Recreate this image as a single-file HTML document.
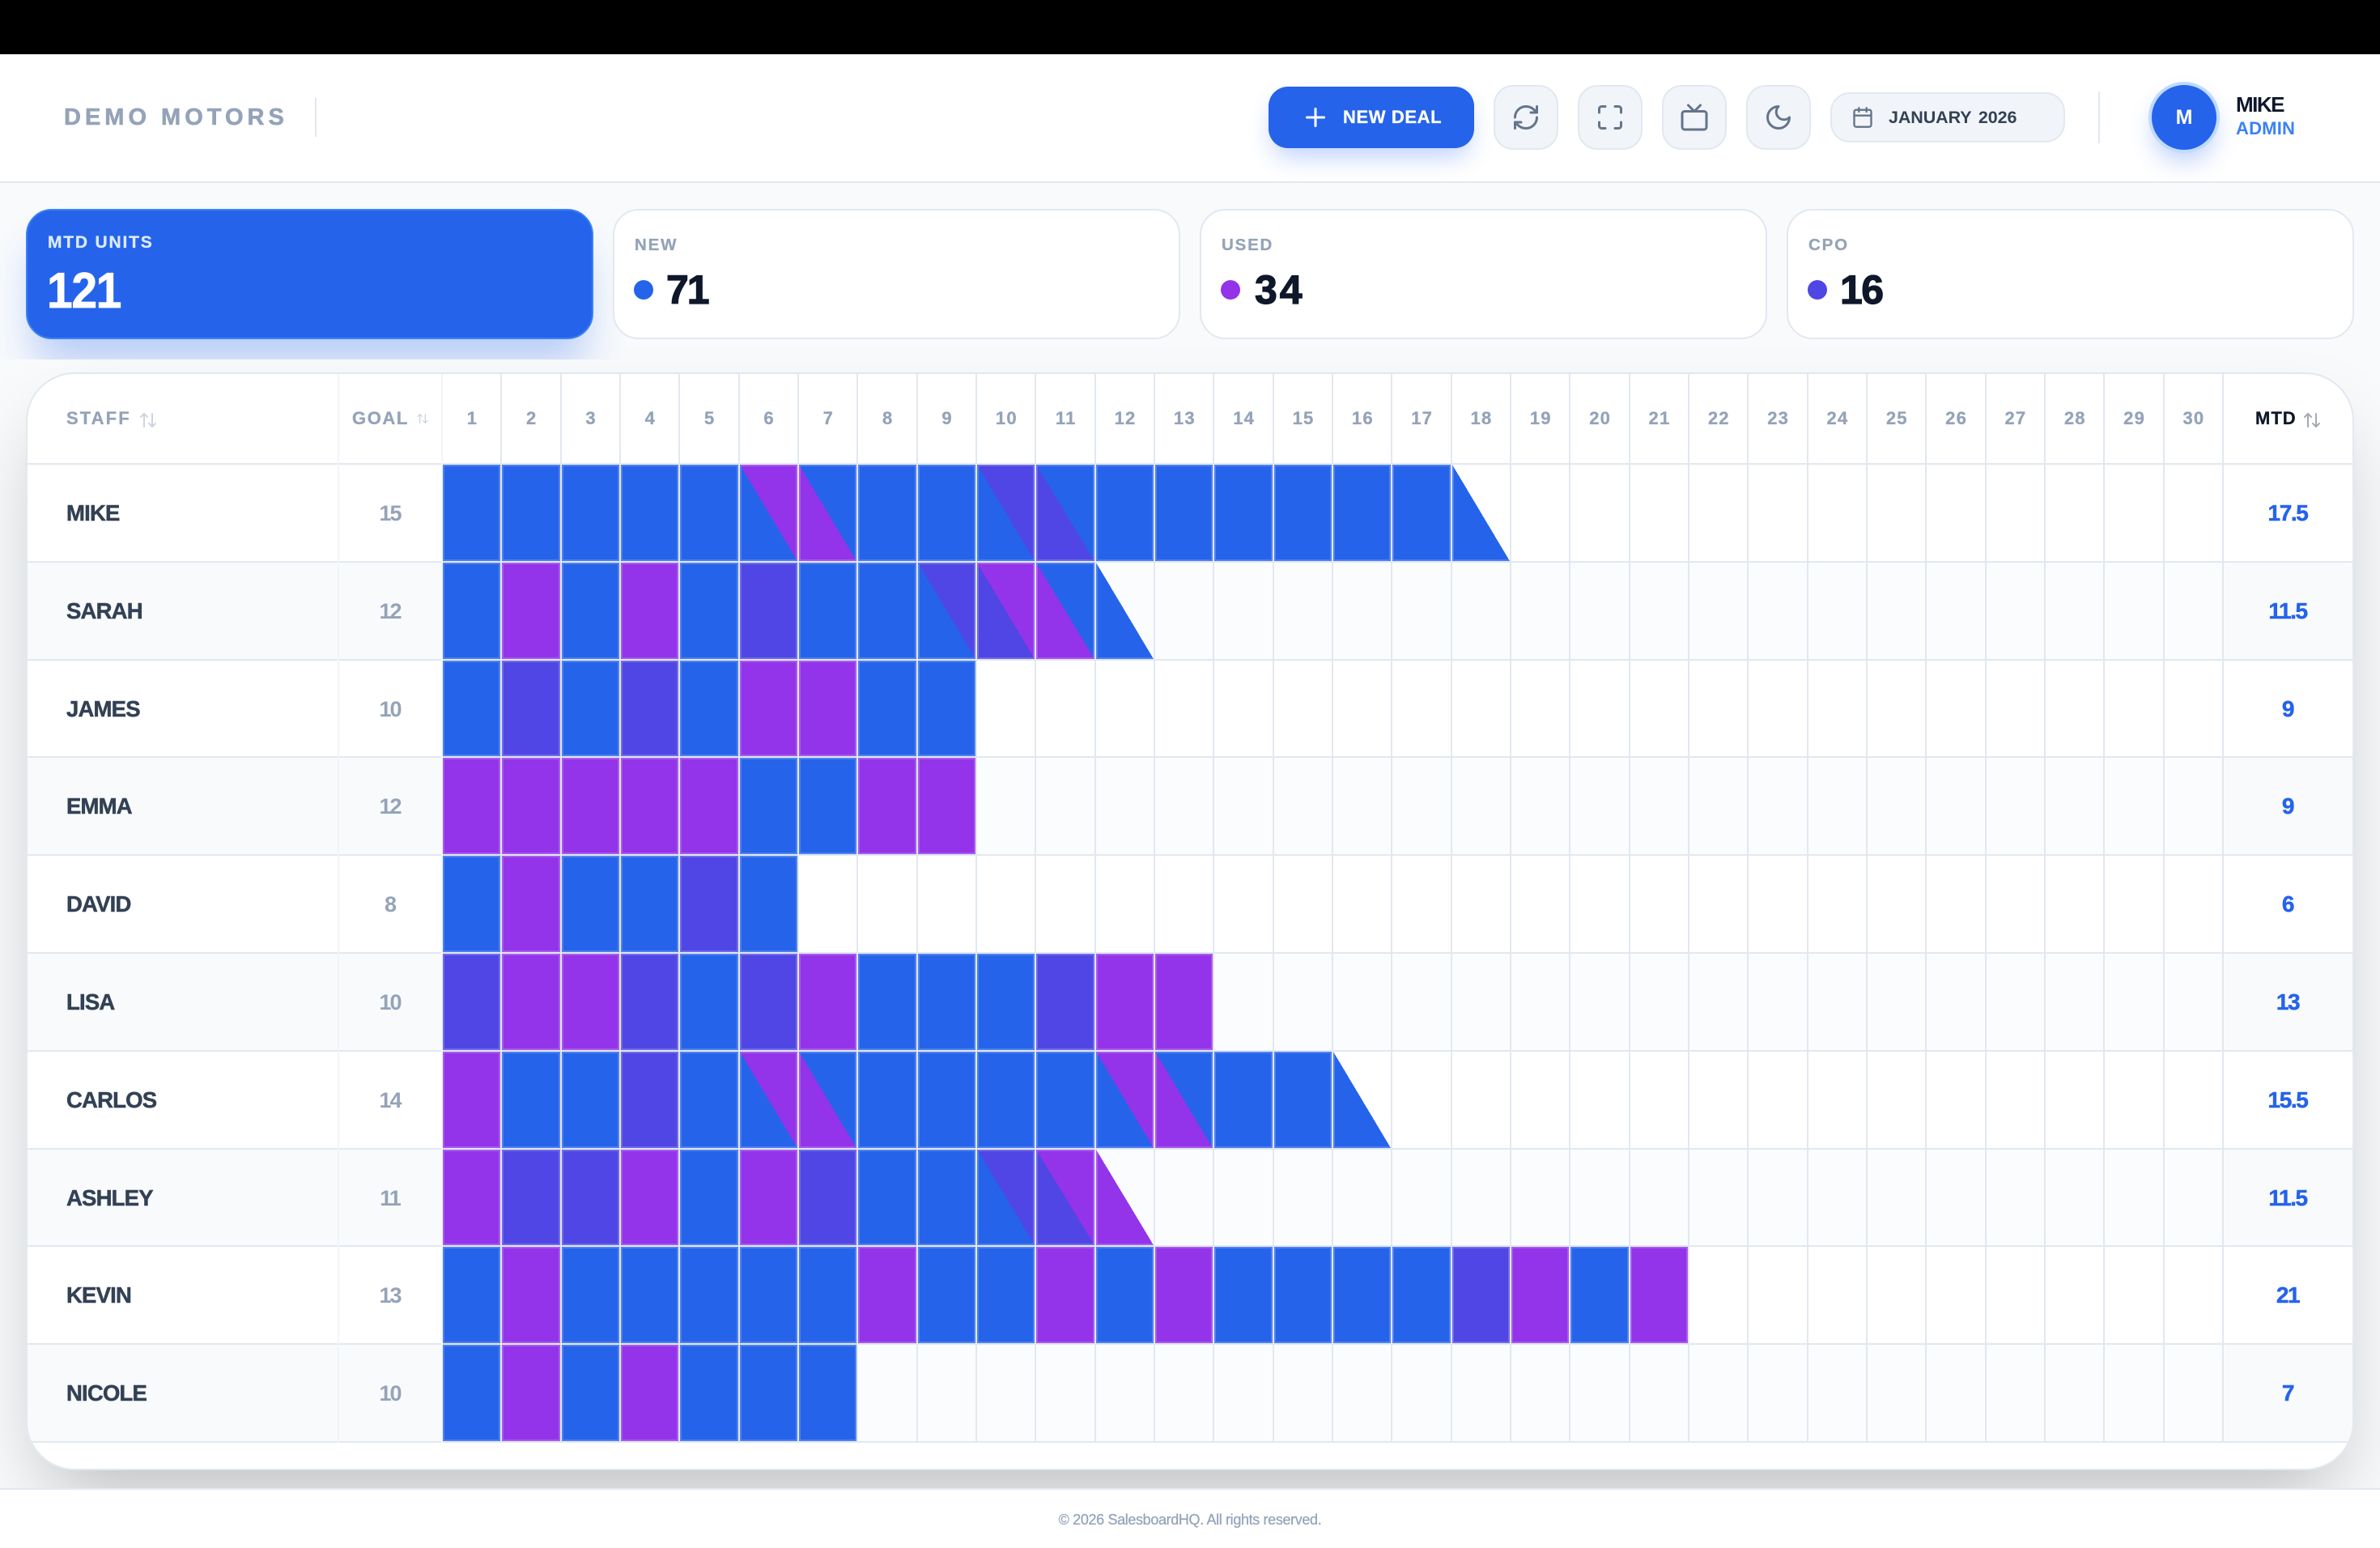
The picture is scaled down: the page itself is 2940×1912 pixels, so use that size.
<!DOCTYPE html>
<html lang="en">
<head>
<meta charset="utf-8">
<title>Demo Motors</title>
<style>
*{box-sizing:border-box}
html,body{margin:0;padding:0;width:2940px;height:1912px;overflow:hidden;background:#fff;font-family:"Liberation Sans",Arial,sans-serif;font-weight:700}
.abs,.t{position:absolute}
.t{white-space:nowrap;line-height:40px}
#top{position:absolute;left:0;top:0;width:2940px;height:67px;background:#000}
#head{position:absolute;left:0;top:67px;width:2940px;height:159px;background:#fff;border-bottom:2px solid #e2e8f0}
#main{position:absolute;left:0;top:226px;width:2940px;height:1612px;background:#f8fafc;overflow:hidden}
#foot{position:absolute;left:0;top:1838px;width:2940px;height:74px;background:#fff;border-top:2px solid #e2e8f0}
.vl{position:absolute;width:2px;background:#e2e8f0}
.ib{position:absolute;top:105px;width:80px;height:80px;border-radius:24px;background:#f1f5f9;border:2px solid #e2e8f0;display:flex;align-items:center;justify-content:center}
svg{display:block;fill:none;stroke-linecap:round;stroke-linejoin:round}
.ib svg{width:36px;height:36px;stroke:#64748b;stroke-width:2}
#deal{position:absolute;left:1567px;top:107px;width:254px;height:76px;border-radius:24px;background:#2563eb;box-shadow:0 16px 30px -6px rgba(37,99,235,.3)}
#date{position:absolute;left:2261px;top:114px;width:290px;height:62px;border-radius:24px;background:#f1f5f9;border:2px solid #e2e8f0}
#ava{position:absolute;left:2654px;top:101px;width:88px;height:88px;border-radius:50%;background:#2563eb;border:4px solid #bfdbfe;box-shadow:0 16px 30px -6px rgba(37,99,235,.3);color:#fff;font-size:25px;line-height:80px;text-align:center}
#stats{position:absolute;left:0;top:0;width:2940px;height:218px;overflow:hidden}
.s{position:absolute;top:32px;width:701px;height:161px;border-radius:32px;background:#fff;border:2px solid #e2e8f0}
.s.m{background:#2563eb;border-color:#3b82f6;box-shadow:0 40px 50px -10px rgba(37,99,235,.3)}
.lb{font-size:20.5px;letter-spacing:1.8px;color:#94a3b8;left:25px;top:23px;-webkit-text-stroke:.3px #94a3b8}
.val{font-size:50px;color:#0f172a;left:63px;top:68px;line-height:60px;-webkit-text-stroke:1.2px #0f172a}
.dot{position:absolute;left:24px;top:86px;width:24px;height:24px;border-radius:50%}
#card{position:absolute;left:32px;top:234px;width:2876px;height:1356px;background:#fff;border:2px solid #e2e8f0;border-radius:60px;overflow:hidden}
#shadow{position:absolute;left:32px;top:234px;width:2876px;height:1356px;border-radius:60px;box-shadow:0 50px 100px -24px rgba(0,0,0,.25)}
.th{position:absolute;top:0;line-height:110px;font-size:22px;color:#94a3b8;white-space:nowrap;-webkit-text-stroke:.3px #94a3b8}
#hl{position:absolute;left:0;top:110px;width:2872px;height:2px;background:#e2e8f0}
.r{position:absolute;left:0;width:2872px;height:120.8px;border-bottom:2px solid #e2e8f0}
.r.e{background:#fbfcfd}
.r.e .n,.r.e .g,.r.e .v{background:#f8fafc}
.n,.g,.v{position:absolute;top:0;height:118.8px;line-height:120px}
.n{left:0;width:383px;padding-left:48px;font-size:27.5px;letter-spacing:-.8px;color:#334155;-webkit-text-stroke:.5px #334155}
.g{left:383px;width:130px;text-align:center;font-size:27px;letter-spacing:-2px;color:#94a3b8;padding-right:1px}
.v{left:2714px;width:158px;text-align:center;font-size:28px;letter-spacing:-1.4px;color:#2563eb;-webkit-text-stroke:.5px #2563eb;padding-right:2px}
.d{position:absolute;left:513px;top:0;height:118.8px;display:flex}
.d i{flex:0 0 71.33px;margin-right:2px;height:100%;box-shadow:inset 0 0 0 2px rgba(255,255,255,.2)}
.b{background:#2563eb}.p{background:#9333ea}.x{background:#4f46e5}
.bp{background:linear-gradient(to top right,#2563eb 50%,#9333ea 50%)}
.pb{background:linear-gradient(to top right,#9333ea 50%,#2563eb 50%)}
.bx{background:linear-gradient(to top right,#2563eb 50%,#4f46e5 50%)}
.xb{background:linear-gradient(to top right,#4f46e5 50%,#2563eb 50%)}
.xp{background:linear-gradient(to top right,#4f46e5 50%,#9333ea 50%)}
.bn{background:linear-gradient(to top right,#2563eb 50%,transparent 50%)}
.pn{background:linear-gradient(to top right,#9333ea 50%,transparent 50%)}
#days{position:absolute;left:513px;top:0;height:1320px;display:flex}
#days span{flex:0 0 73.33px;height:100%;border-right:2px solid #e2e8f0;text-align:center;padding-left:1.5px;line-height:110px;font-size:22px;letter-spacing:1.2px;color:#94a3b8;-webkit-text-stroke:.3px #94a3b8}
.pl{position:absolute;top:0;width:2px;height:1320px;background:#f1f5f9}
</style>
</head>
<body>
<div id="top"></div>

<div id="head"></div>
<div class="t" style="left:79px;top:125px;font-size:29px;letter-spacing:5px;color:#94a3b8;-webkit-text-stroke:.6px #94a3b8">DEMO MOTORS</div>
<div class="vl" style="left:389px;top:121px;height:48px"></div>

<div id="deal"></div>
<svg class="abs" style="left:1607px;top:127px;width:36px;height:36px;stroke:#fff;stroke-width:2" viewBox="0 0 24 24"><path d="M5 12h14"/><path d="M12 5v14"/></svg>
<div class="t" style="left:1659px;top:125px;font-size:22px;letter-spacing:.6px;color:#fff;-webkit-text-stroke:.3px #fff">NEW DEAL</div>

<div class="ib" style="left:1845px"><svg viewBox="0 0 24 24"><path d="M3 12a9 9 0 0 1 9-9 9.75 9.75 0 0 1 6.74 2.74L21 8"/><path d="M21 3v5h-5"/><path d="M21 12a9 9 0 0 1-9 9 9.75 9.75 0 0 1-6.74-2.74L3 16"/><path d="M8 16H3v5"/></svg></div>
<div class="ib" style="left:1949px"><svg viewBox="0 0 24 24"><path d="M8 3H5a2 2 0 0 0-2 2v3"/><path d="M21 8V5a2 2 0 0 0-2-2h-3"/><path d="M3 16v3a2 2 0 0 0 2 2h3"/><path d="M16 21h3a2 2 0 0 0 2-2v-3"/></svg></div>
<div class="ib" style="left:2053px"><svg viewBox="0 0 24 24"><rect x="2" y="7" width="20" height="15" rx="2" ry="2"/><path d="M17 2l-5 5-5-5"/></svg></div>
<div class="ib" style="left:2157px"><svg viewBox="0 0 24 24"><path d="M12 3a6 6 0 0 0 9 9 9 9 0 1 1-9-9Z"/></svg></div>

<div id="date"></div>
<svg class="abs" style="left:2287px;top:131px;width:28px;height:28px;stroke:#64748b;stroke-width:2" viewBox="0 0 24 24"><path d="M8 2v4"/><path d="M16 2v4"/><rect x="3" y="4" width="18" height="18" rx="2"/><path d="M3 10h18"/></svg>
<div class="t" style="left:2333px;top:125px;font-size:21.5px;letter-spacing:-.1px;word-spacing:3px;color:#334155">JANUARY 2026</div>

<div class="vl" style="left:2592px;top:113px;height:64px"></div>
<div id="ava">M</div>
<div class="t" style="left:2762px;top:109px;font-size:26px;letter-spacing:-1.5px;color:#0f172a">MIKE</div>
<div class="t" style="left:2762px;top:139px;font-size:22px;letter-spacing:.2px;color:#3b82f6">ADMIN</div>

<div id="main">
  <div id="stats">
    <div class="s m" style="left:32px">
      <div class="t" style="left:25px;top:20px;font-size:21px;letter-spacing:1.8px;color:#dbeafe;-webkit-text-stroke:.3px #dbeafe">MTD UNITS</div>
      <div class="t" style="left:24px;top:70px;font-size:62px;letter-spacing:-1.5px;line-height:60px;color:#fff;-webkit-text-stroke:.8px #fff;transform:scaleX(.92);transform-origin:left center">121</div>
    </div>
    <div class="s" style="left:757px">
      <div class="t lb">NEW</div><div class="dot b"></div><div class="t val" style="left:64px;letter-spacing:-2px">71</div>
    </div>
    <div class="s" style="left:1482px">
      <div class="t lb">USED</div><div class="dot p"></div><div class="t val" style="left:66px;letter-spacing:3px">34</div>
    </div>
    <div class="s" style="left:2207px">
      <div class="t lb">CPO</div><div class="dot x"></div><div class="t val" style="letter-spacing:-1.5px;left:64px">16</div>
    </div>
  </div>

  <div id="shadow"></div>
  <div id="card">
    <div class="th" style="left:48px;letter-spacing:2.1px">STAFF</div>
    <svg class="abs" style="left:137px;top:45px;width:24px;height:24px;stroke:#cbd5e1;stroke-width:2" viewBox="0 0 24 24"><path d="M21 16l-4 4-4-4"/><path d="M17 20V4"/><path d="M3 8l4-4 4 4"/><path d="M7 4v16"/></svg>
    <div class="th" style="left:401px;letter-spacing:1.6px">GOAL</div>
    <svg class="abs" style="left:480px;top:47px;width:16px;height:16px;stroke:#cbd5e1;stroke-width:2" viewBox="0 0 24 24"><path d="M21 16l-4 4-4-4"/><path d="M17 20V4"/><path d="M3 8l4-4 4 4"/><path d="M7 4v16"/></svg>
    <div class="th" style="left:2752px;letter-spacing:1px;color:#0f172a;-webkit-text-stroke:.3px #0f172a">MTD</div>
    <svg class="abs" style="left:2810px;top:45px;width:24px;height:24px;stroke:#a3a9b5;stroke-width:2" viewBox="0 0 24 24"><path d="M21 16l-4 4-4-4"/><path d="M17 20V4"/><path d="M3 8l4-4 4 4"/><path d="M7 4v16"/></svg>
    <div id="hl"></div>

    <div class="r" style="top:112px"><div class="n">MIKE</div><div class="g">15</div><div class="d"><i class="b"></i><i class="b"></i><i class="b"></i><i class="b"></i><i class="b"></i><i class="bp"></i><i class="pb"></i><i class="b"></i><i class="b"></i><i class="bx"></i><i class="xb"></i><i class="b"></i><i class="b"></i><i class="b"></i><i class="b"></i><i class="b"></i><i class="b"></i><i class="bn"></i></div><div class="v">17.5</div></div>
    <div class="r e" style="top:232.8px"><div class="n">SARAH</div><div class="g">12</div><div class="d"><i class="b"></i><i class="p"></i><i class="b"></i><i class="p"></i><i class="b"></i><i class="x"></i><i class="b"></i><i class="b"></i><i class="bx"></i><i class="xp"></i><i class="pb"></i><i class="bn"></i></div><div class="v">11.5</div></div>
    <div class="r" style="top:353.6px"><div class="n">JAMES</div><div class="g">10</div><div class="d"><i class="b"></i><i class="x"></i><i class="b"></i><i class="x"></i><i class="b"></i><i class="p"></i><i class="p"></i><i class="b"></i><i class="b"></i></div><div class="v">9</div></div>
    <div class="r e" style="top:474.4px"><div class="n">EMMA</div><div class="g">12</div><div class="d"><i class="p"></i><i class="p"></i><i class="p"></i><i class="p"></i><i class="p"></i><i class="b"></i><i class="b"></i><i class="p"></i><i class="p"></i></div><div class="v">9</div></div>
    <div class="r" style="top:595.2px"><div class="n">DAVID</div><div class="g">8</div><div class="d"><i class="b"></i><i class="p"></i><i class="b"></i><i class="b"></i><i class="x"></i><i class="b"></i></div><div class="v">6</div></div>
    <div class="r e" style="top:716px"><div class="n">LISA</div><div class="g">10</div><div class="d"><i class="x"></i><i class="p"></i><i class="p"></i><i class="x"></i><i class="b"></i><i class="x"></i><i class="p"></i><i class="b"></i><i class="b"></i><i class="b"></i><i class="x"></i><i class="p"></i><i class="p"></i></div><div class="v">13</div></div>
    <div class="r" style="top:836.8px"><div class="n">CARLOS</div><div class="g">14</div><div class="d"><i class="p"></i><i class="b"></i><i class="b"></i><i class="x"></i><i class="b"></i><i class="bp"></i><i class="pb"></i><i class="b"></i><i class="b"></i><i class="b"></i><i class="b"></i><i class="bp"></i><i class="pb"></i><i class="b"></i><i class="b"></i><i class="bn"></i></div><div class="v">15.5</div></div>
    <div class="r e" style="top:957.6px"><div class="n">ASHLEY</div><div class="g">11</div><div class="d"><i class="p"></i><i class="x"></i><i class="x"></i><i class="p"></i><i class="b"></i><i class="p"></i><i class="x"></i><i class="b"></i><i class="b"></i><i class="bx"></i><i class="xp"></i><i class="pn"></i></div><div class="v">11.5</div></div>
    <div class="r" style="top:1078.4px"><div class="n">KEVIN</div><div class="g">13</div><div class="d"><i class="b"></i><i class="p"></i><i class="b"></i><i class="b"></i><i class="b"></i><i class="b"></i><i class="b"></i><i class="p"></i><i class="b"></i><i class="b"></i><i class="p"></i><i class="b"></i><i class="p"></i><i class="b"></i><i class="b"></i><i class="b"></i><i class="b"></i><i class="x"></i><i class="p"></i><i class="b"></i><i class="p"></i></div><div class="v">21</div></div>
    <div class="r e" style="top:1199.2px"><div class="n">NICOLE</div><div class="g">10</div><div class="d"><i class="b"></i><i class="p"></i><i class="b"></i><i class="p"></i><i class="b"></i><i class="b"></i><i class="b"></i></div><div class="v">7</div></div>

    <div class="pl" style="left:383px"></div>
    <div class="pl" style="left:511px"></div>
    <div id="days"><span>1</span><span>2</span><span>3</span><span>4</span><span>5</span><span>6</span><span>7</span><span>8</span><span>9</span><span>10</span><span>11</span><span>12</span><span>13</span><span>14</span><span>15</span><span>16</span><span>17</span><span>18</span><span>19</span><span>20</span><span>21</span><span>22</span><span>23</span><span>24</span><span>25</span><span>26</span><span>27</span><span>28</span><span>29</span><span>30</span></div>
  </div>
</div>

<div id="foot"></div>
<div class="t" style="left:0;width:2940px;top:1857px;text-align:center;font-size:18px;font-weight:400;letter-spacing:-.36px;color:#94a3b8;-webkit-text-stroke:.25px #94a3b8">© 2026 SalesboardHQ. All rights reserved.</div>
</body>
</html>
